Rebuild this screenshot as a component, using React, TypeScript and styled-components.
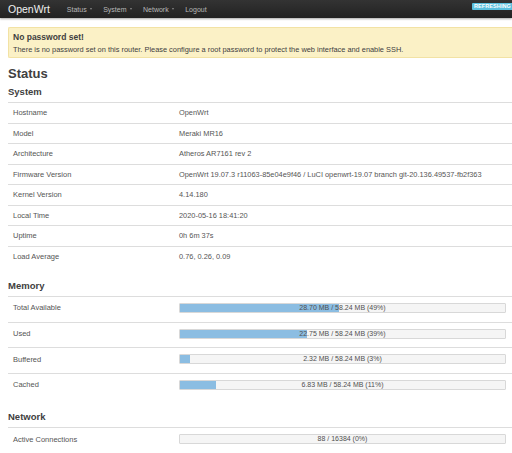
import React from 'react';
import styled, { createGlobalStyle } from 'styled-components';

const GlobalStyle = createGlobalStyle`
  html, body {
    margin: 0;
    padding: 0;
    background: #fff;
    font-family: 'Liberation Sans', Arial, sans-serif;
    color: #404040;
  }
  * { box-sizing: border-box; }
`;

const system = [
  ['Hostname', 'OpenWrt'],
  ['Model', 'Meraki MR16'],
  ['Architecture', 'Atheros AR7161 rev 2'],
  ['Firmware Version', 'OpenWrt 19.07.3 r11063-85e04e9f46 / LuCI openwrt-19.07 branch git-20.136.49537-fb2f363'],
  ['Kernel Version', '4.14.180'],
  ['Local Time', '2020-05-16 18:41:20'],
  ['Uptime', '0h 6m 37s'],
  ['Load Average', '0.76, 0.26, 0.09'],
];

const memory = [
  { label: 'Total Available', pct: 49, text: '28.70 MB / 58.24 MB (49%)' },
  { label: 'Used', pct: 39, text: '22.75 MB / 58.24 MB (39%)' },
  { label: 'Buffered', pct: 3, text: '2.32 MB / 58.24 MB (3%)' },
  { label: 'Cached', pct: 11, text: '6.83 MB / 58.24 MB (11%)' },
];

const App = () => {
  return (
    <>
      <GlobalStyle />
      <Navbar>
        <Brand>OpenWrt</Brand>
        <Menu>
          <MenuItem $caret>Status</MenuItem>
          <MenuItem $caret>System</MenuItem>
          <MenuItem $caret>Network</MenuItem>
          <MenuItem>Logout</MenuItem>
        </Menu>
        <Badge>REFRESHING</Badge>
      </Navbar>
      <Main>
        <Alert>
          <AlertTitle>No password set!</AlertTitle>
          <AlertText>
            There is no password set on this router. Please configure a root password to protect the web interface and
            enable SSH.
          </AlertText>
        </Alert>
        <PageTitle>Status</PageTitle>

        <SectionTitle $top={4}>System</SectionTitle>
        <Table>
          {system.map(([k, v]) => (
            <Row key={k}>
              <Label>{k}</Label>
              <Value>{v}</Value>
            </Row>
          ))}
        </Table>

        <SectionTitle $top={14}>Memory</SectionTitle>
        <Table>
          {memory.map((m) => (
            <Row key={m.label} $tall>
              <Label>{m.label}</Label>
              <Value>
                <Bar>
                  <BarFill style={{ width: `${m.pct}%` }} />
                  <BarText>{m.text}</BarText>
                </Bar>
              </Value>
            </Row>
          ))}
        </Table>

        <SectionTitle $top={12.5}>Network</SectionTitle>
        <Table>
          <Row $tall>
            <Label>Active Connections</Label>
            <Value>
              <Bar>
                <BarFill style={{ width: '0%' }} />
                <BarText>88 / 16384 (0%)</BarText>
              </Bar>
            </Value>
          </Row>
        </Table>
      </Main>
    </>
  );
};

export default App;

const Navbar = styled.div`
  height: 18px;
  display: flex;
  align-items: center;
  padding: 0 0 0 8px;
  background: linear-gradient(#333, #222);
  box-shadow: 0 1px 2px rgba(0, 0, 0, 0.35);
`;

const Brand = styled.div`
  font-size: 10.5px;
  color: #f0f0f0;
  margin-right: 17px;
  line-height: 18px;
`;

const Menu = styled.div`
  display: flex;
  gap: 11.5px;
  flex: 1;
`;

const MenuItem = styled.div<{ $caret?: boolean }>`
  font-size: 7px;
  color: #b8b8b8;
  display: flex;
  align-items: center;
  gap: 3px;

  &::after {
    content: '';
    display: ${(p) => (p.$caret ? 'block' : 'none')};
    border-left: 1.5px solid transparent;
    border-right: 1.5px solid transparent;
    border-top: 2px solid #888;
  }
`;

const Badge = styled.div`
  background: #5bc0de;
  color: #fff;
  font-size: 5.5px;
  font-weight: bold;
  letter-spacing: 0.1px;
  height: 7px;
  line-height: 7px;
  padding: 0 1px 0 2px;
  border-radius: 1px 0 0 1px;
  margin-top: -6px;
  white-space: nowrap;
`;

const Main = styled.div`
  padding: 9px 0 0 8px;
`;

const Alert = styled.div`
  background: #fbf1c6;
  border: 1px solid #f2e2a4;
  border-right: none;
  border-radius: 2px 0 0 2px;
  padding: 4px 0 3px 4px;
`;

const AlertTitle = styled.div`
  font-size: 8.5px;
  font-weight: bold;
  color: #404040;
  line-height: 11px;
  margin-bottom: 2px;
`;

const AlertText = styled.div`
  font-size: 7.4px;
  color: #404040;
  line-height: 9px;
  white-space: nowrap;
`;

const PageTitle = styled.h2`
  font-size: 13px;
  font-weight: bold;
  color: #404040;
  margin: 8px 0 0;
  line-height: 16px;
`;

const SectionTitle = styled.h3<{ $top: number }>`
  font-size: 9.5px;
  font-weight: bold;
  color: #404040;
  margin: ${(p) => p.$top}px 0 0;
  line-height: 12px;
  padding-bottom: 4px;
`;

const Table = styled.div`
  display: flex;
  flex-direction: column;
`;

const Row = styled.div<{ $tall?: boolean }>`
  display: grid;
  grid-template-columns: 171px 1fr;
  align-items: center;
  height: ${(p) => (p.$tall ? '25.7px' : '20.5px')};
  padding-bottom: ${(p) => (p.$tall ? '3px' : '0')};
  border-top: 1px solid #ddd;
`;

const Label = styled.div`
  font-size: 7.5px;
  color: #555;
  padding-left: 5px;
  white-space: nowrap;
`;

const Value = styled.div`
  font-size: 7.4px;
  color: #555;
  padding-right: 6px;
  white-space: nowrap;
`;

const Bar = styled.div`
  position: relative;
  height: 10px;
  background: #f5f5f5;
  border: 1px solid #d8d8d8;
  border-radius: 1px;
  overflow: hidden;
`;

const BarFill = styled.div`
  height: 100%;
  background: #8bbde2;
`;

const BarText = styled.div`
  position: absolute;
  inset: 0;
  text-align: center;
  font-size: 7px;
  line-height: 8px;
  color: #505050;
`;
